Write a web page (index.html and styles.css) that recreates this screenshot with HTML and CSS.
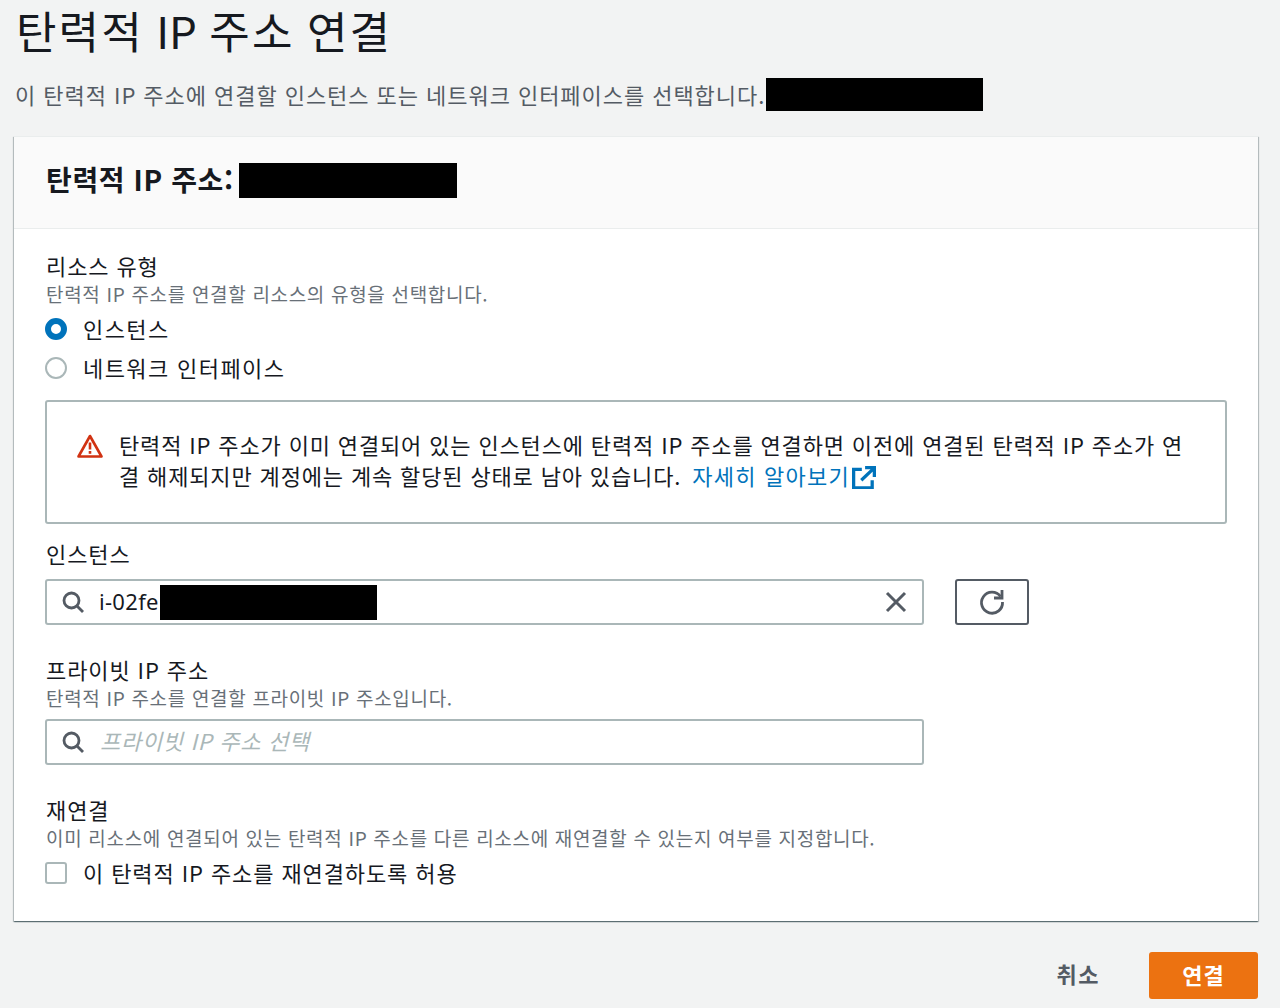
FILE: index.html
```html
<!DOCTYPE html>
<html lang="ko">
<head>
<meta charset="utf-8">
<title>탄력적 IP 주소 연결</title>
<link rel="stylesheet" href="styles.css">
</head>
<body>
<header class="page-head">
  <h1 class="page-title">탄력적 <span class="ip">IP</span> 주소 연결</h1>
  <p class="page-desc">이 탄력적 IP 주소에 연결할 인스턴스 또는 네트워크 인터페이스를 선택합니다.<span class="redact redact-desc"></span></p>
</header>
<main class="card">
  <div class="card-head">
    <h2 class="card-title">탄력적 IP 주소:</h2>
    <span class="redact redact-head"></span>
  </div>
  <div class="card-body">
    <div class="label">리소스 유형</div>
    <div class="hint">탄력적 IP 주소를 연결할 리소스의 유형을 선택합니다.</div>
    <div class="choices">
      <div class="choice"><span class="radio radio-on"></span><span class="choice-text">인스턴스</span></div>
      <div class="choice"><span class="radio"></span><span class="choice-text">네트워크 인터페이스</span></div>
    </div>
    <div class="alert">
      <svg class="alert-icon" viewBox="0 0 26 24" width="26" height="24"><path d="M13 2 L24.5 22.5 H1.5 Z" fill="none" stroke="#d13212" stroke-width="2.6" stroke-linejoin="round"/><path d="M13 8.5v7" stroke="#d13212" stroke-width="2.6"/><path d="M13 17v2.8" stroke="#d13212" stroke-width="2.6"/></svg>
      <p class="alert-text">탄력적 IP 주소가 이미 연결되어 있는 인스턴스에 탄력적 IP 주소를 연결하면 이전에 연결된 탄력적 IP 주소가 연결 해제되지만 계정에는 계속 할당된 상태로 남아 있습니다. <a class="link" href="#">자세히 알아보기<svg class="ext" viewBox="0 0 22 21" width="24" height="23"><path d="M9 3H1.5v17h17v-7" fill="none" stroke="#0073bb" stroke-width="3"/><path d="M8.5 13L19 3M12 1.5h8.5V10" fill="none" stroke="#0073bb" stroke-width="3"/></svg></a></p>
    </div>
    <div class="label label-instance">인스턴스</div>
    <div class="instance-row">
      <div class="field">
        <svg class="search" viewBox="0 0 24 24" width="24" height="24"><circle cx="10.5" cy="10.5" r="7.5" fill="none" stroke="#545b64" stroke-width="2.8"/><path d="M16 16l6 6" stroke="#545b64" stroke-width="2.8"/></svg>
        <span class="value">i-02fe</span><span class="redact redact-input"></span>
        <svg class="clear" viewBox="0 0 24 24" width="24" height="24"><path d="M3 3l18 18M21 3L3 21" stroke="#545b64" stroke-width="3"/></svg>
      </div>
      <button class="refresh" type="button" aria-label="새로 고침"><svg viewBox="0 0 28 28" width="28" height="28"><path d="M22.5 8.5A10.5 10.5 0 1 0 24.5 14" fill="none" stroke="#545b64" stroke-width="2.8"/><path d="M24 2v8h-8" fill="none" stroke="#545b64" stroke-width="2.8"/></svg></button>
    </div>
    <div class="label label-group">프라이빗 IP 주소</div>
    <div class="hint">탄력적 IP 주소를 연결할 프라이빗 IP 주소입니다.</div>
    <div class="field field-private">
      <svg class="search" viewBox="0 0 24 24" width="24" height="24"><circle cx="10.5" cy="10.5" r="7.5" fill="none" stroke="#545b64" stroke-width="2.8"/><path d="M16 16l6 6" stroke="#545b64" stroke-width="2.8"/></svg>
      <span class="placeholder">프라이빗 IP 주소 선택</span>
    </div>
    <div class="label label-group">재연결</div>
    <div class="hint">이미 리소스에 연결되어 있는 탄력적 IP 주소를 다른 리소스에 재연결할 수 있는지 여부를 지정합니다.</div>
    <div class="check-row"><span class="checkbox"></span><span class="check-text">이 탄력적 IP 주소를 재연결하도록 허용</span></div>
  </div>
</main>
<footer class="actions">
  <button class="btn-cancel" type="button">취소</button>
  <button class="btn-primary" type="button">연결</button>
</footer>
</body>
</html>
```
FILE: styles.css
```css
* { box-sizing: border-box; }
html, body { margin: 0; padding: 0; }
body {
  width: 1280px;
  height: 1008px;
  overflow: hidden;
  background: #f2f3f3;
  color: #16191f;
  font-family: "Noto Sans CJK KR", "Noto Sans", sans-serif;
  font-size: 22px;
}
.redact { display: inline-block; background: #000; flex: none; }
.page-head { padding: 0 0 0 16px; height: 136px; }
.page-title {
  margin: 0;
  height: 62px;
  font-size: 44px;
  font-weight: 400;
  line-height: 60px;
  letter-spacing: 2.1px;
  word-spacing: -2px;
  color: #16191f;
}
.ip { letter-spacing: 0; }
.page-desc {
  margin: 16px 0 0 -1px;
  display: flex;
  align-items: center;
  height: 33px;
  font-size: 22px;
  line-height: 33px;
  letter-spacing: 0.95px;
  color: #545b64;
  white-space: nowrap;
}
.redact-desc { width: 217px; height: 33px; margin-left: 1px; }
.card {
  margin-left: 14px;
  width: 1244px;
  height: 785px;
  background: #fff;
  box-shadow: 0 1px 1px 0 rgba(0, 28, 36, .4), 1px 1px 1px 0 rgba(0, 28, 36, .2), -1px 1px 1px 0 rgba(0, 28, 36, .2);
  border-top: 1px solid #eaeded;
}
.card-head {
  display: flex;
  align-items: center;
  height: 92px;
  padding: 0 0 5px 32px;
  background: #fafafa;
  border-bottom: 1px solid #eaeded;
}
.card-title { margin: 0; height: 35px; font-size: 28px; font-weight: 700; line-height: 33px; letter-spacing: 0.62px; white-space: nowrap; }
.redact-head { width: 218px; height: 35px; margin-left: 5px; }
.card-body { padding: 23px 31px 0 32px; }
.label { height: 28px; font-size: 22px; line-height: 26px; letter-spacing: 0.9px; white-space: nowrap; }
.hint { height: 28px; font-size: 19px; line-height: 28px; letter-spacing: 0.68px; color: #687078; white-space: nowrap; }
.choices { margin-top: 1px; margin-left: -1px; }
.choice { display: flex; align-items: center; gap: 16px; height: 39px; letter-spacing: 1.4px; }
.choice-text { padding-bottom: 2px; }
.radio { width: 22px; height: 22px; border-radius: 50%; border: 2px solid #aab7b8; background: #fff; flex: none; }
.radio-on { border: 6px solid #0073bb; }
.alert {
  display: flex;
  align-items: flex-start;
  gap: 16px;
  height: 124px;
  margin: 13px 0 0 -1px;
  padding: 27px 38px 0 30px;
  border: 2px solid #aab7b8;
  border-radius: 3px;
  background: #fff;
}
.alert-icon { flex: none; margin-top: 5px; }
.alert-text { margin: 0; font-size: 22px; line-height: 31px; letter-spacing: 0.85px; word-break: break-all; }
.link { margin-left: 4px; color: #0073bb; text-decoration: none; white-space: nowrap; letter-spacing: 1.25px; }
.ext { vertical-align: -4px; margin-left: 2px; }
.label-instance { margin-top: 16px; }
.instance-row { display: flex; gap: 31px; margin: 11px 0 0 -1px; }
.field {
  display: flex;
  align-items: center;
  width: 879px;
  height: 46px;
  padding: 0 15px 0 14px;
  border: 2px solid #aab7b8;
  border-radius: 3px;
  background: #fff;
}
.search { flex: none; margin-right: 14px; }
.value { padding-bottom: 2px; font-size: 22px; letter-spacing: 0.3px; color: #16191f; white-space: nowrap; font-family: "Noto Sans", sans-serif; }
.redact-input { width: 217px; height: 35px; margin-left: 1px; }
.clear { margin-left: auto; flex: none; margin-right: -1px; }
.refresh {
  display: flex;
  align-items: center;
  justify-content: center;
  width: 74px;
  height: 46px;
  padding: 0;
  border: 2px solid #545b64;
  border-radius: 3px;
  background: #fff;
}
.label-group { margin-top: 31px; }
.field-private { margin: 7px 0 0 -1px; }
.placeholder { margin-left: 1px; padding-bottom: 4px; font-size: 22px; font-style: italic; color: #aab7b8; letter-spacing: 0.7px; white-space: nowrap; }
.check-row { display: flex; align-items: center; gap: 16px; height: 38px; margin: 2px 0 0 -1px; letter-spacing: 0.9px; white-space: nowrap; }
.check-text { padding-bottom: 3px; }
.checkbox { width: 22px; height: 22px; border: 2px solid #aab7b8; border-radius: 3px; background: #fff; flex: none; }
.actions { display: flex; justify-content: flex-end; align-items: center; gap: 49px; margin: 31px 22px 0 0; }
.btn-cancel { padding: 0 0 5px; border: 0; background: none; font: inherit; font-weight: 700; font-size: 22px; color: #545b64; letter-spacing: 1.5px; }
.btn-primary {
  width: 109px;
  height: 47px;
  padding: 0 0 3px;
  border: 0;
  border-radius: 3px;
  background: #ec7211;
  color: #fff;
  font: inherit;
  font-weight: 700;
  font-size: 22px;
  letter-spacing: 0.9px;
}
```
